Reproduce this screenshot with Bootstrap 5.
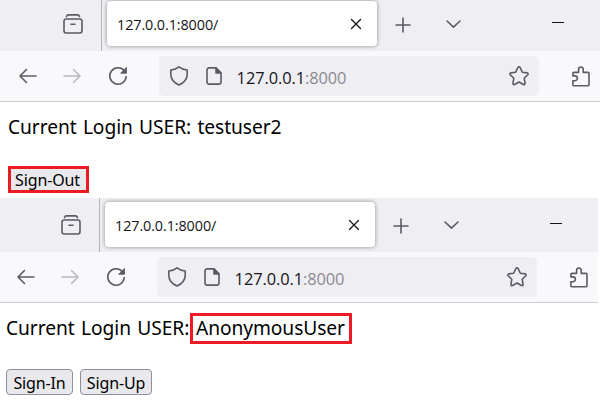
<!DOCTYPE html>
<html lang="en">
<head>
<meta charset="utf-8">
<meta name="viewport" content="width=device-width, initial-scale=1">
<title>Login state</title>
<link href="https://cdn.jsdelivr.net/npm/bootstrap@5.3.0/dist/css/bootstrap.min.css" rel="stylesheet">
<style>
body{width:600px;height:404px;overflow:hidden;background:#fff;color:#000;font-family:"Noto Sans","Open Sans",sans-serif}
svg{display:block;flex:none;fill:none;stroke:#5b5b66;stroke-width:1.6;stroke-linecap:round;stroke-linejoin:round}
.browser{width:600px;height:198px;overflow:hidden}
.browser-second{height:206px;margin-left:-2px}
.strip{height:51px;background:#efeef3}
.browser-second .strip{height:54px}
.strip-left{width:102px;border-right:1px solid #b5b4bc;padding:0 18px 17px 0}
.page-tab{width:270px;height:45px;margin:0 0 5px 5px;padding:0 13px 0 10px;background:#fff;border-radius:4px;box-shadow:0 0 4px rgba(0,0,0,.42);font:14.4px/45px "Open Sans",sans-serif;letter-spacing:-.1px;color:#15141a}
.page-tab span{padding-top:1px}
.dark{stroke:#15141a}
.plus{margin:0 0 18.500px 18px}
.chev{margin:0 0 21.500px 34px}
.mini{margin:0 0 27px 90px}
.tools{height:51px;background:#f9f9fb;border-bottom:1px solid #ccccd0;padding-left:18px}
.reload{margin-left:26px}
.address{width:380px;height:40px;margin-left:31px;padding:0 10px;background:#efeef3;border-radius:5px;font:16.4px/40px "Open Sans",sans-serif;letter-spacing:-.09px;color:#15141a}
.address span{padding-top:3px;margin-left:14.600px}
.address i{font-style:normal;color:#8b8a91}
.doc{margin-left:17px}
.puzzle{margin-right:10px}
.line{font-size:19.2px;line-height:26px;height:31px;white-space:pre;word-spacing:1.4px;letter-spacing:-.07px}
.line-first{margin:11px 0 0 8px;padding-top:1px}
.line-second{margin:10px 0 0 8px}
.line-second>span:first-child{width:184px;padding-bottom:2px;letter-spacing:-.06px}
.marked{border:3px solid #ed1c24}
.user-box{width:162px;height:31px;padding-left:3px;line-height:23px;letter-spacing:-.08px}
.form-btn{height:26px;padding:0;border:1px solid #8f8f9d;border-radius:4px;background:#e9e9ed;color:#000;font-size:16px;line-height:26px;letter-spacing:-.15px;text-align:center}
.out{width:81px;height:27px;margin:22px 0 0 8px;line-height:22px;border:3px solid #ed1c24;border-radius:0;padding-right:2px}
.pair{margin:25px 0 0 8px;gap:7px}
.in{width:67px}.up{width:72px}
</style>
<script src="https://cdn.jsdelivr.net/npm/bootstrap@5.3.0/dist/js/bootstrap.bundle.min.js"></script>
</head>
<body>
<svg width="0" height="0" class="position-absolute">
<symbol id="box" viewBox="0 0 20 20"><path d="M3.500 2.600Q4 .9 5.500.9h9q1.500 0 2 1.700"/><rect x="1" y="5" width="18" height="14" rx="2.200"/><path d="M8 10.200h4"/></symbol>
<symbol id="back" viewBox="0 0 20 20"><path d="M18 10H2M8.500 3.500 2 10l6.500 6.500"/></symbol>
<symbol id="reload" viewBox="0 0 20 20"><path d="M16.300 4.700A8.200 8.200 0 1 0 18.200 10.500"/><path d="M18.400 1.900v5.300h-5.300z" fill="#5b5b66" stroke-width="1"/></symbol>
<symbol id="shield" viewBox="0 0 20 20"><path d="M10 .9c2.300 1.900 5 2.800 8.200 3.100v4.300c0 4.800-3.600 8.700-8.200 10.800-4.600-2.100-8.200-6-8.200-10.800V4C5 3.700 7.700 2.800 10 .9z"/></symbol>
<symbol id="page" viewBox="0 0 16 18"><path d="M10 .9H3a2 2 0 0 0-2 2v12.200a2 2 0 0 0 2 2h10a2 2 0 0 0 2-2V6z"/><path d="M10 1v5h5z" fill="#5b5b66"/></symbol>
<symbol id="star" viewBox="0 0 20 20"><path d="M8.900 1.500q1.100-1.300 2.200 0l2.200 4.700 5 .7q1.400.6.500 1.800l-3.600 3.600.9 5.200q-.2 1.500-1.700 1L10 16l-4.400 2.500q-1.500.5-1.700-1l.9-5.200L1.200 8.700q-.9-1.200.5-1.800l5-.7z"/></symbol>
<symbol id="puzzle" viewBox="0 0 18 21"><path d="M2 19.800q-1.100 0-1.100-1.100v-4H3a2.400 2.400 0 0 0 0-4.800H.9V7.500Q.9 6.400 2 6.400h4.600V3.300a2.300 2.300 0 0 1 4.600 0v3.100h4.600q1.200 0 1.200 1.100v11.200q0 1.100-1.200 1.100z"/></symbol>
</svg>

<section class="browser">
<div class="strip d-flex align-items-end">
<div class="strip-left d-flex justify-content-end align-self-stretch align-items-end"><svg width="20" height="20"><use href="#box"/></svg></div>
<div class="page-tab d-flex align-items-center justify-content-between"><span>127.0.0.1:8000/</span><svg class="dark" width="16" height="16"><path d="m3.500 3.500 9 9m0-9-9 9" stroke-width="1.300"/></svg></div>
<svg class="plus" width="16" height="16"><path d="M8 1v14M1 8h14"/></svg>
<svg class="chev" width="17" height="12"><path d="m2 3 6.500 6.200L15 3"/></svg>
<svg class="mini dark" width="12" height="3"><path d="M0 1.500h12" stroke-width="1"/></svg>
</div>
<div class="tools d-flex align-items-center">
<svg width="20" height="20"><use href="#back"/></svg>
<svg width="20" height="20" class="ms-4 opacity-50" viewBox="0 0 20 20"><path d="M2 10h16M11.500 3.500 18 10l-6.500 6.500" opacity=".8"/></svg>
<svg width="20" height="20" class="reload"><use href="#reload"/></svg>
<div class="address d-flex align-items-center"><svg width="20" height="20"><use href="#shield"/></svg><svg class="doc" width="16" height="18"><use href="#page"/></svg><span>127.0.0.1<i>:8000</i></span><svg class="ms-auto" width="20" height="20"><use href="#star"/></svg></div>
<svg class="ms-auto puzzle" width="18" height="21"><use href="#puzzle"/></svg>
</div>
<div class="line line-first">Current Login USER: testuser2</div>
<button class="btn form-btn out d-block">Sign-Out</button>
</section>

<section class="browser browser-second">
<div class="strip d-flex align-items-end">
<div class="strip-left d-flex justify-content-end align-self-stretch align-items-end"><svg width="20" height="20"><use href="#box"/></svg></div>
<div class="page-tab d-flex align-items-center justify-content-between"><span>127.0.0.1:8000/</span><svg class="dark" width="16" height="16"><path d="m3.500 3.500 9 9m0-9-9 9" stroke-width="1.300"/></svg></div>
<svg class="plus" width="16" height="16"><path d="M8 1v14M1 8h14"/></svg>
<svg class="chev" width="17" height="12"><path d="m2 3 6.500 6.200L15 3"/></svg>
<svg class="mini dark" width="12" height="3"><path d="M0 1.500h12" stroke-width="1"/></svg>
</div>
<div class="tools d-flex align-items-center">
<svg width="20" height="20"><use href="#back"/></svg>
<svg width="20" height="20" class="ms-4 opacity-50" viewBox="0 0 20 20"><path d="M2 10h16M11.500 3.500 18 10l-6.500 6.500" opacity=".8"/></svg>
<svg width="20" height="20" class="reload"><use href="#reload"/></svg>
<div class="address d-flex align-items-center"><svg width="20" height="20"><use href="#shield"/></svg><svg class="doc" width="16" height="18"><use href="#page"/></svg><span>127.0.0.1<i>:8000</i></span><svg class="ms-auto" width="20" height="20"><use href="#star"/></svg></div>
<svg class="ms-auto puzzle" width="18" height="21"><use href="#puzzle"/></svg>
</div>
<div class="line line-second d-flex align-items-center"><span>Current Login USER:</span><span class="marked user-box">AnonymousUser</span></div>
<div class="pair d-flex"><button class="btn form-btn in">Sign-In</button><button class="btn form-btn up">Sign-Up</button></div>
</section>
</body>
</html>
